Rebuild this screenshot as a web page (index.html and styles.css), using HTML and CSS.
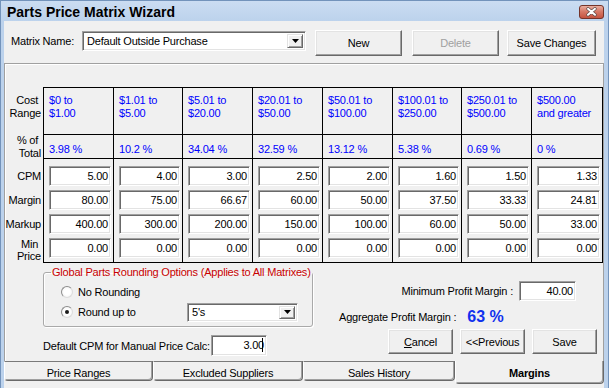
FILE: index.html
```html
<!DOCTYPE html>
<html>
<head>
  <title>Parts Price Matrix Wizard</title>
  <link rel="stylesheet" href="styles.css">
</head>
<body>
  <div class="window">
    <div class="titlebar">
      <span class="title">Parts Price Matrix Wizard</span>
      <span class="close">
        <svg width="25" height="14" viewBox="0 0 25 14">
          <defs>
            <linearGradient id="closegrad" x1="0" y1="0" x2="0" y2="1">
              <stop offset="0" stop-color="#eab3a6"/>
              <stop offset="0.45" stop-color="#d77a68"/>
              <stop offset="1" stop-color="#c4503c"/>
            </linearGradient>
          </defs>
          <rect x="0.5" y="0.5" width="24" height="13" rx="2.5" fill="url(#closegrad)" stroke="#74342a"/>
          <path d="M9 3.8L16 9.8M16 3.8L9 9.8" stroke="#5a4a48" stroke-width="3.4" stroke-linecap="round"/>
          <path d="M9 3.8L16 9.8M16 3.8L9 9.8" stroke="#fff" stroke-width="2" stroke-linecap="round"/>
        </svg>
      </span>
    </div>

    <div class="client">
      <div class="toolbar">
        <span class="matrix-label">Matrix Name:</span>
        <div class="combo combo-matrix">
          <span class="combo-text">Default Outside Purchase</span>
          <span class="drop"><svg width="7" height="4" viewBox="0 0 7 4"><path d="M0 0h7L3.5 4z" fill="#000"/></svg></span>
        </div>
        <button class="btn btn-new">New</button>
        <button class="btn btn-delete" disabled>Delete</button>
        <button class="btn btn-save-changes">Save Changes</button>
      </div>

      <div class="panel">
        <div class="matrix">
          <!-- cost ranges -->
          <div class="rowlabel label-range">Cost&nbsp;<br>Range</div>
          <div class="cell range">$0 to<br>$1.00</div>
          <div class="cell range">$1.01 to<br>$5.00</div>
          <div class="cell range">$5.01 to<br>$20.00</div>
          <div class="cell range">$20.01 to<br>$50.00</div>
          <div class="cell range">$50.01 to<br>$100.00</div>
          <div class="cell range">$100.01 to<br>$250.00</div>
          <div class="cell range">$250.01 to<br>$500.00</div>
          <div class="cell range last">$500.00<br>and greater</div>

          <!-- percent of total -->
          <div class="rowlabel label-pct">% of&nbsp;<br>Total</div>
          <div class="cell pct">3.98 %</div>
          <div class="cell pct">10.2 %</div>
          <div class="cell pct">34.04 %</div>
          <div class="cell pct">32.59 %</div>
          <div class="cell pct">13.12 %</div>
          <div class="cell pct">5.38 %</div>
          <div class="cell pct">0.69 %</div>
          <div class="cell pct last">0 %</div>

          <!-- cpm / margin / markup / min price -->
          <div class="rowlabel label-fields">
            <div class="slot">CPM</div>
            <div class="slot">Margin</div>
            <div class="slot">Markup</div>
            <div class="slot two-line">Min&nbsp;<br>Price</div>
          </div>
          <div class="cell fields">
            <div class="field">5.00</div><div class="field">80.00</div><div class="field">400.00</div><div class="field">0.00</div>
          </div>
          <div class="cell fields">
            <div class="field">4.00</div><div class="field">75.00</div><div class="field">300.00</div><div class="field">0.00</div>
          </div>
          <div class="cell fields">
            <div class="field">3.00</div><div class="field">66.67</div><div class="field">200.00</div><div class="field">0.00</div>
          </div>
          <div class="cell fields">
            <div class="field">2.50</div><div class="field">60.00</div><div class="field">150.00</div><div class="field">0.00</div>
          </div>
          <div class="cell fields">
            <div class="field">2.00</div><div class="field">50.00</div><div class="field">100.00</div><div class="field">0.00</div>
          </div>
          <div class="cell fields">
            <div class="field">1.60</div><div class="field">37.50</div><div class="field">60.00</div><div class="field">0.00</div>
          </div>
          <div class="cell fields">
            <div class="field">1.50</div><div class="field">33.33</div><div class="field">50.00</div><div class="field">0.00</div>
          </div>
          <div class="cell fields last">
            <div class="field">1.33</div><div class="field">24.81</div><div class="field">33.00</div><div class="field">0.00</div>
          </div>
        </div>

        <div class="lower">
          <div class="lower-left">
            <fieldset class="group">
              <legend>Global Parts Rounding Options (Applies to All Matrixes)</legend>
              <div class="radio-row">
                <span class="radio"></span>
                <span>No Rounding</span>
              </div>
              <div class="radio-row">
                <span class="radio checked"></span>
                <span>Round up to</span>
                <div class="combo combo-round">
                  <span class="combo-text">5's</span>
                  <span class="drop"><svg width="7" height="4" viewBox="0 0 7 4"><path d="M0 0h7L3.5 4z" fill="#000"/></svg></span>
                </div>
              </div>
            </fieldset>
            <div class="cpm-row">
              <span class="cpm-label">Default CPM for Manual Price Calc:</span>
              <div class="field field-cpm">3.00<span class="caret"></span></div>
            </div>
          </div>

          <div class="lower-right">
            <div class="minprofit-row">
              <span class="minprofit-label">Minimum Profit Margin :</span>
              <div class="field field-minprofit">40.00</div>
            </div>
            <div class="aggregate-row">
              <span>Aggregate Profit Margin :</span>
              <span class="aggregate-value">63 %</span>
            </div>
            <div class="action-row">
              <button class="btn btn-action"><u>C</u>ancel</button>
              <button class="btn btn-action">&lt;&lt;Previous</button>
              <button class="btn btn-action">Save</button>
            </div>
          </div>
        </div>
      </div>

      <div class="tabs">
        <div class="tab tab-1">Price Ranges</div>
        <div class="tab tab-2">Excluded Suppliers</div>
        <div class="tab tab-3">Sales History</div>
        <div class="tab tab-4 selected">Margins</div>
      </div>
    </div>
  </div>
</body>
</html>
```

FILE: styles.css
```css
* {
  box-sizing: border-box;
}

body {
  margin: 0;
  font-family: "Liberation Sans", Arial, sans-serif;
  font-size: 11px;
  letter-spacing: -0.2px;
  color: #000;
  background: #f0f0f0;
}

/* window frame */
.window {
  width: 609px;
  height: 388px;
  display: flex;
  flex-direction: column;
  background: #bcd2ec;
  border: 1px solid #7393bb;
  border-bottom: none;
  overflow: hidden;
}

.titlebar {
  height: 20px;
  flex: none;
  display: flex;
  align-items: center;
  justify-content: space-between;
  padding: 0 4px 0 6px;
  background: linear-gradient(#cbdcf2, #bcd2ec);
}

.title {
  font-size: 14px;
  font-weight: bold;
  letter-spacing: 0;
  color: #000;
  padding-top: 1px;
}

.close {
  display: flex;
  margin-top: 1px;
}

.client {
  flex: 1;
  margin: 0 4px 0 3px;
  background: #f0f0f0;
  display: flex;
  flex-direction: column;
}

/* top row */
.toolbar {
  height: 42px;
  flex: none;
  display: flex;
  align-items: flex-start;
  padding-top: 9px;
}

.matrix-label {
  width: 71px;
  margin-left: 7px;
  margin-top: 1px;
  line-height: 20px;
  white-space: nowrap;
}

.combo {
  height: 20px;
  display: flex;
  align-items: center;
  background: #fff;
  border: 1px solid;
  border-color: #a0a0a0 #fff #fff #a0a0a0;
  box-shadow: inset 1px 1px 0 #696969, inset -1px -1px 0 #e3e3e3;
  padding: 2px;
}

.combo-text {
  flex: 1;
  padding-left: 2px;
  white-space: nowrap;
}

.drop {
  width: 16px;
  height: 100%;
  display: flex;
  align-items: center;
  justify-content: center;
  background: #f0f0f0;
  border: 1px solid;
  border-color: #e3e3e3 #696969 #696969 #e3e3e3;
  box-shadow: inset 1px 1px 0 #fff, inset -1px -1px 0 #a0a0a0;
}

.combo-matrix {
  width: 224px;
  margin-top: 1px;
}

.btn {
  appearance: none;
  font-family: inherit;
  font-size: 11px;
  letter-spacing: -0.2px;
  color: #000;
  background: #f0f0f0;
  padding: 0;
  border: 1px solid;
  border-color: #fff #696969 #696969 #fff;
  box-shadow: inset -1px -1px 0 #a0a0a0, inset 1px 1px 0 #e3e3e3;
}

.btn:disabled {
  color: #a0a0a0;
}

.btn-new {
  width: 87px;
  height: 26px;
  margin-left: 9px;
}

.btn-delete {
  width: 87px;
  height: 26px;
  margin-left: 10px;
}

.btn-save-changes {
  width: 89px;
  height: 26px;
  margin-left: 8px;
}

/* tab page */
.panel {
  height: 298px;
  flex: none;
  border: 1px solid #a0a0a0;
  border-bottom: none;
  box-shadow: inset 1px 1px 0 #fff;
  display: flex;
  flex-direction: column;
}

.matrix {
  margin-top: 23px;
  display: grid;
  grid-template-columns: 38px 70px 69px 70px 70px 70px 69px 70px 72px;
  grid-template-rows: 47px 24px 105px;
}

.cell {
  border-left: 1px solid #000;
  border-top: 1px solid #000;
  white-space: nowrap;
}

.cell.last {
  border-right: 1px solid #000;
}

.rowlabel {
  text-align: right;
  padding-right: 2px;
  line-height: 13px;
  white-space: nowrap;
}

.label-range {
  padding-top: 7px;
}

.range {
  color: #0000ff;
  line-height: 13px;
  padding: 6px 0 0 5px;
}

.pct {
  color: #0000ff;
  line-height: 13px;
  padding: 8px 0 0 5px;
}

.label-fields {
  padding-top: 8px;
  display: flex;
  flex-direction: column;
  gap: 4px;
}

.slot {
  height: 20px;
  line-height: 20px;
}

.slot.two-line {
  line-height: 12px;
}

.fields {
  border-bottom: 1px solid #000;
  padding: 7px 2px 0 5px;
  display: flex;
  flex-direction: column;
  gap: 4px;
}

.field {
  height: 20px;
  line-height: 16px;
  text-align: right;
  background: #fff;
  border: 1px solid;
  border-color: #a0a0a0 #fff #fff #a0a0a0;
  box-shadow: inset 1px 1px 0 #696969, inset -1px -1px 0 #e3e3e3;
  padding: 1px 2px 0 0;
}

/* lower area */
.lower {
  flex: 1;
  display: flex;
}

.lower-left {
  width: 270px;
  flex: none;
  margin-left: 38px;
}

.group {
  margin: 3px 0 0 0;
  padding: 3px 0 4px 0;
  border: 1px solid #a9a9a9;
  border-radius: 3px;
  box-shadow: inset 1px 1px 0 #fff, 1px 1px 0 #fff;
}

.group legend {
  color: #c80000;
  line-height: 13px;
  padding: 0 1px;
  margin-left: 7px;
  white-space: nowrap;
}

.radio-row {
  height: 20px;
  display: flex;
  align-items: center;
  padding-left: 17px;
  white-space: nowrap;
}

.radio {
  width: 12px;
  height: 12px;
  margin-right: 5px;
  border-radius: 50%;
  border: 1px solid;
  border-color: #8c8c8c #dcdcdc #dcdcdc #8c8c8c;
  background: radial-gradient(circle at 50% 50%, #fff 40%, #ececec 100%);
  display: flex;
  align-items: center;
  justify-content: center;
}

.radio.checked::after {
  content: "";
  width: 4px;
  height: 4px;
  border-radius: 50%;
  background: #1a1a1a;
}

.combo-round {
  width: 111px;
  height: 19px;
  margin-left: auto;
  margin-right: 14px;
}

.cpm-row {
  margin-top: 8px;
  display: flex;
  align-items: center;
  height: 21px;
}

.cpm-label {
  width: 168px;
  flex: none;
  white-space: nowrap;
}

.field-cpm {
  position: relative;
  width: 56px;
  height: 21px;
  line-height: 17px;
}

.caret {
  position: absolute;
  right: 3px;
  top: 2px;
  width: 1px;
  height: 14px;
  background: #000;
}

.lower-right {
  flex: 1;
  display: flex;
  flex-direction: column;
  white-space: nowrap;
}

.minprofit-row {
  margin-top: 18px;
  height: 20px;
  display: flex;
  align-items: center;
  justify-content: flex-end;
  padding-right: 27px;
}

.minprofit-label {
  margin-right: 6px;
}

.field-minprofit {
  width: 57px;
}

.aggregate-row {
  margin-top: 6px;
  height: 20px;
  display: flex;
  align-items: center;
  padding-left: 26px;
}

.aggregate-value {
  margin-left: 11px;
  font-size: 16px;
  font-weight: bold;
  letter-spacing: 0;
  color: #1030ee;
}

.action-row {
  margin-top: 2px;
  display: flex;
  justify-content: flex-end;
  gap: 7px;
  padding-right: 6px;
}

.btn-action {
  width: 65px;
  height: 25px;
}

/* tabs along the bottom */
.tabs {
  display: flex;
  align-items: flex-start;
}

.tab {
  height: 20px;
  line-height: 13px;
  padding-top: 5px;
  text-align: center;
  white-space: nowrap;
  border-top: 1px solid #7a7a7a;
  border-left: 1px solid #fff;
  border-right: 1px solid #696969;
  border-bottom: 1px solid #696969;
  border-radius: 0 0 4px 4px;
  box-shadow: inset -1px -1px 0 #a0a0a0;
}

.tab.selected {
  height: 23px;
  border-top: none;
  padding-top: 6px;
  font-weight: bold;
}

.tab-1 {
  width: 149px;
}

.tab-2 {
  width: 150px;
}

.tab-3 {
  width: 152px;
}

.tab-4 {
  width: 149px;
}
```
